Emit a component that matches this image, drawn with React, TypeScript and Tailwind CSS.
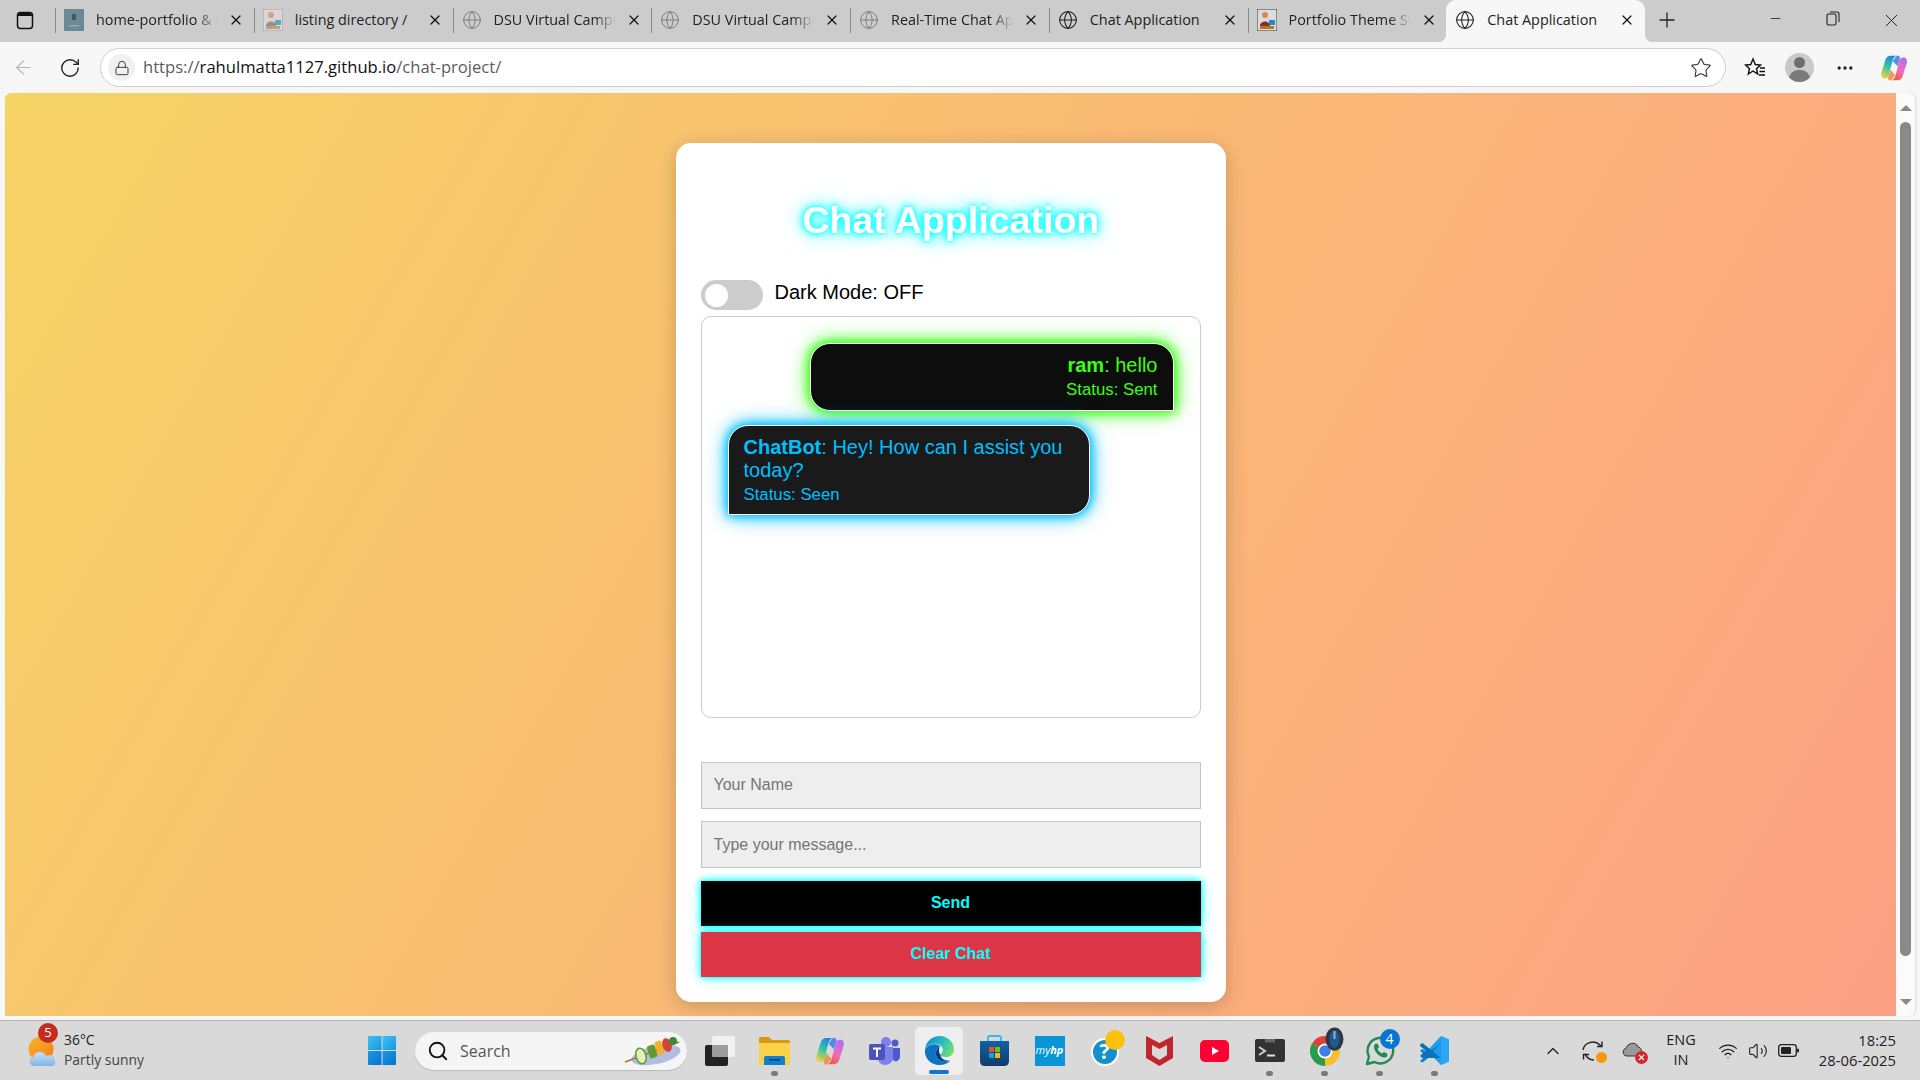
import { ArrowLeft, ChevronUp, Ellipsis, Globe, Lock, Minus, Plus, RotateCw, Search, Star, Volume2, Wifi, X } from 'lucide-react';
import type { ReactNode } from 'react';

const tabs = [
  { title: 'home-portfolio & user', icon: 'thumb', fade: true },
  { title: 'listing directory /', icon: 'person', fade: false },
  { title: 'DSU Virtual Campus', icon: 'grayGlobe', fade: true },
  { title: 'DSU Virtual Campus', icon: 'grayGlobe', fade: true },
  { title: 'Real-Time Chat App', icon: 'grayGlobe', fade: true },
  { title: 'Chat Application', icon: 'globe', fade: false },
  { title: 'Portfolio Theme Switch', icon: 'portfolio', fade: true },
];

function ThumbIcon() {
  return (
    <svg width="20" height="22" viewBox="0 0 20 22">
      <rect width="20" height="22" fill="#6c8996" />
      <rect x="8" y="5" width="4" height="6" fill="#3f5a68" />
      <rect x="5" y="16" width="10" height="1.5" fill="#93a9b3" />
    </svg>
  );
}

function PersonIcon({ vivid }: { vivid?: boolean }) {
  return (
    <svg width="20" height="22" viewBox="0 0 20 22">
      <rect width="20" height="22" fill={vivid ? '#dcdcdc' : '#d8d8d8'} stroke={vivid ? '#333' : '#999'} strokeWidth="1" />
      <circle cx="8" cy="6" r="3" fill={vivid ? '#d9874f' : '#cf9f86'} />
      <path d="M3 17 C3 11 13 11 13 17Z" fill={vivid ? '#8f2f24' : '#a98a80'} />
      <rect x="12" y="11" width="6" height="5" fill={vivid ? '#1a8fd0' : '#62a3c4'} />
      <rect x="3" y="17" width="14" height="3" fill={vivid ? '#b57a20' : '#b9a27e'} />
    </svg>
  );
}

function TabIcon({ icon }: { icon: string }) {
  if (icon === 'thumb') return <ThumbIcon />;
  if (icon === 'person') return <PersonIcon />;
  if (icon === 'portfolio') return <PersonIcon vivid />;
  if (icon === 'grayGlobe') return <Globe size={22} strokeWidth={1.2} className="text-[#7d7d7d]" />;
  return <Globe size={22} strokeWidth={1.3} className="text-[#222]" />;
}

function Tab({ title, icon, fade, active }: { title: string; icon: string; fade?: boolean; active?: boolean }) {
  return (
    <div className={`relative flex h-[42px] w-[198.75px] items-center pb-[3px] pl-[9px] ${active ? 'rounded-t-[10px] bg-[#f7f7f7]' : ''}`}>
      {!active && <div className="absolute left-0 top-[8px] h-[25px] w-px bg-[#8a8a8a]" />}
      {active && <div className="absolute bottom-0 left-[-8px] h-2 w-2 bg-[radial-gradient(circle_at_0_0,transparent_8px,#f7f7f7_8.5px)]" />}
      {active && <div className="absolute bottom-0 right-[-8px] h-2 w-2 bg-[radial-gradient(circle_at_100%_0,transparent_8px,#f7f7f7_8.5px)]" />}
      <div className="flex w-5 shrink-0 justify-center">
        <TabIcon icon={icon} />
      </div>
      <div className={`ml-3 w-[122px] overflow-hidden whitespace-nowrap text-[14.4px] text-[#222] ${fade ? '[mask-image:linear-gradient(to_right,black_82%,transparent)]' : ''}`}>
        {title}
      </div>
      <X size={16} strokeWidth={1.8} className="ml-[10px] text-[#111]" />
    </div>
  );
}

function SidebarIcon() {
  return (
    <svg width="18" height="19" viewBox="0 0 18 19" fill="none">
      <rect x="1.5" y="1.5" width="15" height="16" rx="3" stroke="#111" strokeWidth="1.5" />
      <path d="M2 5 Q2 2 4.5 2 H13.5 Q16 2 16 5Z" fill="#111" />
    </svg>
  );
}

function CopilotIcon({ size, id }: { size: number; id: string }) {
  return (
    <svg width={size} height={size} viewBox="0 0 32 32">
      <defs>
        <linearGradient id={`${id}a`} x1="0.7" y1="0" x2="0.2" y2="1">
          <stop offset="0" stopColor="#1b7ff0" />
          <stop offset="0.5" stopColor="#35c7a0" />
          <stop offset="1" stopColor="#f4d23c" />
        </linearGradient>
        <linearGradient id={`${id}b`} x1="0.7" y1="0" x2="0.3" y2="1">
          <stop offset="0" stopColor="#b56cf0" />
          <stop offset="0.55" stopColor="#ee6fb8" />
          <stop offset="1" stopColor="#f25a3c" />
        </linearGradient>
      </defs>
      <path d="M12 2 H20 C17 2 15.5 4 14.5 7 L10 24 C9.3 27 7.5 28 5 28 C2 28 0.5 25 1.5 21.5 L6 7 C7 4 9 2 12 2Z" fill={`url(#${id}a)`} />
      <path d="M20 30 H12 C15 30 16.5 28 17.5 25 L22 8 C22.7 5 24.5 4 27 4 C30 4 31.5 7 30.5 10.5 L26 25 C25 28 23 30 20 30Z" fill={`url(#${id}b)`} />
      <path d="M14.5 8 L19 2 H21 C22.5 2 23 4 22.5 6 L20 14 Z" fill="#3a7de8" opacity="0.85" />
      <path d="M17.5 24 L13 30 H11 C9.5 30 9 28 9.5 26 L12 18 Z" fill="#f08a3c" opacity="0.85" />
    </svg>
  );
}

function WindowsLogo() {
  return (
    <svg width="28" height="29" viewBox="0 0 28 29">
      <defs>
        <linearGradient id="winA" x1="0" y1="0" x2="1" y2="1">
          <stop offset="0" stopColor="#3fc3f5" />
          <stop offset="1" stopColor="#1695e0" />
        </linearGradient>
        <linearGradient id="winB" x1="0" y1="0" x2="1" y2="1">
          <stop offset="0" stopColor="#1a9ae6" />
          <stop offset="1" stopColor="#0672cf" />
        </linearGradient>
      </defs>
      <path d="M1 0 H13.5 V14 H0 V1 Q0 0 1 0Z" fill="url(#winA)" />
      <path d="M14.5 0 H27 Q28 0 28 1 V14 H14.5Z" fill="url(#winA)" />
      <path d="M0 15 H13.5 V29 H1 Q0 29 0 28Z" fill="url(#winB)" />
      <path d="M14.5 15 H28 V28 Q28 29 27 29 H14.5Z" fill="url(#winB)" />
    </svg>
  );
}

function WeatherIcon() {
  return (
    <svg width="28" height="30" viewBox="0 0 28 30">
      <defs>
        <linearGradient id="sun" x1="0" y1="0" x2="1" y2="1">
          <stop offset="0" stopColor="#fbb52e" />
          <stop offset="1" stopColor="#ef7d14" />
        </linearGradient>
        <linearGradient id="cloud" x1="0" y1="0" x2="0" y2="1">
          <stop offset="0" stopColor="#c6e2f8" />
          <stop offset="1" stopColor="#7fb6e8" />
        </linearGradient>
      </defs>
      <circle cx="13" cy="13" r="12.5" fill="url(#sun)" />
      <path d="M6 30 C1 30 0 22 5 21.5 C6 15 16 14 18 20 C23 18 28 21 27 25 C28 30 25 30 23 30Z" fill="url(#cloud)" />
    </svg>
  );
}

function Skewer() {
  return (
    <svg width="60" height="36" viewBox="0 0 60 36">
      <ellipse cx="33" cy="22" rx="25" ry="9" transform="rotate(-12 33 22)" fill="#b3bde0" />
      <line x1="2" y1="29" x2="56" y2="9" stroke="#a5763a" strokeWidth="1.6" />
      <ellipse cx="18" cy="23" rx="5" ry="8" transform="rotate(-15 18 23)" fill="#e6efb8" stroke="#5c9a3a" strokeWidth="1.5" />
      <rect x="25" y="12" width="8" height="13" rx="2" transform="rotate(-18 29 18)" fill="#5f9a34" />
      <rect x="33" y="8" width="7" height="14" rx="2" transform="rotate(-18 36 15)" fill="#f3b12a" />
      <ellipse cx="44" cy="12" rx="4.5" ry="7" transform="rotate(-18 44 12)" fill="#d24433" />
      <circle cx="50" cy="8" r="4" fill="#3f8a3a" />
    </svg>
  );
}

function TaskView() {
  return (
    <svg width="30" height="30" viewBox="0 0 30 30">
      <rect x="0" y="9" width="23" height="21" rx="2" fill="#222" />
      <rect x="7" y="0" width="23" height="21" rx="2" fill="#f4f4f4" fillOpacity="0.85" />
      <rect x="7" y="9" width="16" height="12" fill="#8a8a8a" fillOpacity="0.75" />
    </svg>
  );
}

function Files() {
  return (
    <svg width="31" height="30" viewBox="0 0 31 30">
      <path d="M0 3 Q0 1 2 1 H10 L13 4 H29 Q31 4 31 6 V10 H0Z" fill="#d9980f" />
      <path d="M0 7 H31 V28 Q31 29 30 29 H1 Q0 29 0 28Z" fill="#fbd24c" />
      <path d="M5 29 V22 Q5 20 7 20 H24 Q26 20 26 22 V29Z" fill="#0f7fd0" />
      <rect x="10" y="23" width="11" height="1.6" fill="#063f7a" />
    </svg>
  );
}

function Teams() {
  return (
    <svg width="31" height="28" viewBox="0 0 31 28">
      <circle cx="17" cy="5" r="5" fill="#7b83eb" />
      <circle cx="26" cy="6" r="3.5" fill="#5059c9" />
      <path d="M22 11 H31 V19 C31 23 28 25 25 24 L22 20Z" fill="#5059c9" />
      <path d="M9 10 H24 V21 C24 25 20 28 16 28 C12 28 9 25 9 21Z" fill="#7b83eb" />
      <rect x="0" y="7" width="16" height="16" rx="2" fill="#4b53bc" />
      <path d="M4 10.5 H12 V12.5 H9 V20 H7 V12.5 H4Z" fill="#fff" />
    </svg>
  );
}

function Edge() {
  return (
    <svg width="31" height="31" viewBox="0 0 32 32">
      <defs>
        <linearGradient id="edgeA" x1="0" y1="0.3" x2="1" y2="0.7">
          <stop offset="0" stopColor="#0f8fce" />
          <stop offset="0.55" stopColor="#2cc0c0" />
          <stop offset="1" stopColor="#7fe06a" />
        </linearGradient>
      </defs>
      <path d="M1 15 C2 6 9 1 16 1 C25 1 31 8 31 15 C31 20 27 23 22.5 23 C19.5 23 17 21.5 17 20.5 C17 19.5 19.5 18.5 19.5 15.5 C19.5 11.5 15 9 11 9 C6 9 2.5 11.5 1 15Z" fill="url(#edgeA)" />
      <path d="M1 15 C0 24 7 31 16 31 C20.5 31 24 29.5 27 26.5 C21 29 14 27 12.5 21.5 C11.5 17.5 13 14 16.5 11.5 C12 8 4 9.5 1 15Z" fill="#0c72c4" />
      <path d="M12.5 21.5 C14 27 21 29 27 26.5 C21 27 17.5 24.5 17 20.5 C15 18 15 14 16.5 11.5 C13 14 11.5 17.5 12.5 21.5Z" fill="#0a3f86" />
    </svg>
  );
}

function Store() {
  return (
    <svg width="29" height="31" viewBox="0 0 29 31">
      <defs>
        <linearGradient id="storeBg" x1="0" y1="0" x2="0" y2="1">
          <stop offset="0" stopColor="#0f62a8" />
          <stop offset="1" stopColor="#123a6b" />
        </linearGradient>
      </defs>
      <path d="M8 6 V3 Q8 1 10 1 H19 Q21 1 21 3 V6" fill="none" stroke="#34b6ef" strokeWidth="1.8" />
      <path d="M0 6 H29 V26 Q29 31 24 31 H5 Q0 31 0 26Z" fill="url(#storeBg)" />
      <rect x="9" y="12" width="5" height="5" fill="#f25022" />
      <rect x="15" y="12" width="5" height="5" fill="#7fba00" />
      <rect x="9" y="18" width="5" height="5" fill="#00a4ef" />
      <rect x="15" y="18" width="5" height="5" fill="#ffb900" />
    </svg>
  );
}

function MyHp() {
  return (
    <div className="flex h-[30px] w-[30px] items-center justify-center bg-[#0a96d6] text-[11px] italic text-white">
      my<b>hp</b>
    </div>
  );
}

function HelpIcon() {
  return (
    <div className="relative flex h-[30px] w-[30px] items-center justify-center">
      <div className="mt-[2px] flex h-[28px] w-[28px] items-center justify-center rounded-full border-2 border-white bg-[#1490cf] text-[21px] font-bold text-white">
        ?
      </div>
      <div className="absolute right-[-5px] top-[-6px] h-5 w-5 rounded-full bg-[#fdc00f]" />
    </div>
  );
}

function McAfee() {
  return (
    <svg width="27" height="30" viewBox="0 0 27 30">
      <path fillRule="evenodd" d="M0 0 L13.5 7 L27 0 V22 L13.5 30 L0 22Z M6 9 V19 L13.5 24 L21 19 V9 L13.5 13Z" fill="#c0272d" />
    </svg>
  );
}

function YouTube() {
  return (
    <svg width="29" height="22" viewBox="0 0 29 22">
      <rect width="29" height="22" rx="5" fill="#ff0033" />
      <path d="M12 7 L19 11 L12 15Z" fill="#fff" />
    </svg>
  );
}

function TerminalIcon() {
  return (
    <svg width="30" height="23" viewBox="0 0 30 23">
      <path d="M2 0 H28 Q30 0 30 2 V21 Q30 23 28 23 H2 Q0 23 0 21 V2 Q0 0 2 0Z" fill="#333" />
      <rect x="10" y="0" width="10" height="3.5" fill="#666" />
      <path d="M4 8 L10 12 L4 16" fill="none" stroke="#ccc" strokeWidth="2" />
      <rect x="12" y="15.5" width="8" height="2" fill="#ddd" />
    </svg>
  );
}

function Chrome() {
  return (
    <div className="relative h-[30px] w-[30px]">
      <svg width="30" height="30" viewBox="0 0 30 30">
        <path d="M15 15 L2 7.5 A15 15 0 0 1 28 7.5Z" fill="#dc4437" />
        <path d="M15 15 L28 7.5 A15 15 0 0 1 15 30Z" fill="#f5c02c" />
        <path d="M15 15 L15 30 A15 15 0 0 1 2 7.5Z" fill="#2b9a4b" />
        <circle cx="15" cy="15" r="7.5" fill="#fff" />
        <circle cx="15" cy="15" r="5.8" fill="#3f7fe6" />
      </svg>
      <svg width="19" height="24" viewBox="0 0 19 24" className="absolute left-[15px] top-[-9px]">
        <ellipse cx="9.5" cy="12" rx="9" ry="11.5" fill="#2b3744" />
        <ellipse cx="9.5" cy="12" rx="5" ry="9" fill="#20598f" />
        <rect x="8.5" y="4" width="2" height="8" fill="#8fb4d8" />
      </svg>
    </div>
  );
}

function WhatsApp() {
  return (
    <div className="relative h-[30px] w-[30px]">
      <svg width="30" height="30" viewBox="0 0 30 30">
        <path d="M2 28 L4 20.5 A12.8 12.8 0 1 1 9.5 26Z" fill="none" stroke="#1f8a52" strokeWidth="2.4" strokeLinejoin="round" />
        <path d="M10 8 L12.5 7.5 L14 11 L12.5 13 C13.5 15 15 16.5 17 17.5 L19 16 L22.5 18 L22 20.5 C20 22.5 15.5 21 12.5 18 C9.5 15 8 10.5 10 8Z" fill="#1f8a52" />
      </svg>
      <div className="absolute left-[15px] top-[-7px] flex h-5 w-5 items-center justify-center rounded-full bg-[#0a74d4] text-[14px] text-white">4</div>
    </div>
  );
}

function VsCode() {
  return (
    <svg width="31" height="31" viewBox="0 0 31 31">
      <path d="M22 1 L30 4.5 V26.5 L22 30 L8 16 Z" fill="#1f9cf0" />
      <path d="M22 1 L22 30 L30 26.5 V4.5Z" fill="#28a8f5" />
      <path d="M22 8 L8.5 18 L3.5 14 L1 15.5 L6.5 21 L1 26 L3.5 27.5 L8.5 23.5 Z" fill="#0e7fc8" />
      <path d="M22 23 L9 12.5 L3.5 8 L1 9.5 V11 L6.5 15.5 L1 21 L3.5 23 Z" fill="#0a72ba" />
    </svg>
  );
}

function SyncIcon() {
  return (
    <div className="relative h-[22px] w-[22px]">
      <svg width="22" height="22" viewBox="0 0 22 22" fill="none" stroke="#222" strokeWidth="1.4">
        <path d="M1 10 C2 3 12 -1 18 5 L19 7" />
        <path d="M20 1.5 V6.5 H15" />
        <path d="M3 14 L5 17 C8 20 10 20 12 20" />
        <path d="M1.5 19.5 V14.5 H7" />
      </svg>
      <div className="absolute bottom-[-1px] right-[-3px] h-[11px] w-[11px] rounded-full bg-[#f59a0c]" />
    </div>
  );
}

function CloudError() {
  return (
    <div className="relative h-[20px] w-[22px]">
      <svg width="20" height="16" viewBox="0 0 20 16">
        <path d="M5 15 C0 15 0 8 4 7.5 C5 2 14 0 16 6 C19 6 20 10 19 12 L16 15Z" fill="#9a9a9a" stroke="#333" strokeWidth="1" />
      </svg>
      <div className="absolute bottom-[-3px] right-[-4px] flex h-[13px] w-[13px] items-center justify-center rounded-full bg-[#d8232f]">
        <X size={9} strokeWidth={3} className="text-white" />
      </div>
    </div>
  );
}

function BatteryIcon() {
  return (
    <svg width="21" height="13" viewBox="0 0 21 13">
      <rect x="0.7" y="0.7" width="17.6" height="11.6" rx="2.5" fill="none" stroke="#222" strokeWidth="1.3" />
      <rect x="3" y="3" width="10" height="7" rx="1" fill="#222" />
      <rect x="19" y="4.5" width="2" height="4" rx="1" fill="#222" />
    </svg>
  );
}

function TaskItem({ children, dot, active }: { children: ReactNode; dot?: boolean; active?: boolean }) {
  return (
    <div className="relative flex h-[60px] w-[55px] items-center justify-center">
      {active && <div className="absolute left-[3px] top-[6px] h-[48px] w-[48px] rounded-[5px] bg-[#eeeeee]" />}
      <div className="relative">{children}</div>
      {dot && <div className="absolute left-[24px] top-[50px] h-[5px] w-[7px] rounded-full bg-[#7a7a7a]" />}
      {active && <div className="absolute left-[17px] top-[49px] h-[4px] w-[20px] rounded-full bg-[#0a78d6]" />}
    </div>
  );
}

function ChatCard() {
  return (
    <div className="mx-auto mt-[50px] flex h-[859px] w-[550px] flex-col rounded-[15px] bg-white p-[25px] shadow-[0_4px_20px_rgba(0,0,0,0.2)]">
      <h1 className="mt-[31px] text-center text-[37.6px] font-bold leading-[42px] text-white [text-shadow:0_0_5px_#0ff,0_0_10px_#0ff,0_0_20px_#0ff]">
        Chat Application
      </h1>
      <div className="mt-[39px] flex h-[36px] items-start">
        <div className="flex h-[30px] w-[62px] items-center rounded-full bg-[#cccccc] pl-[4px]">
          <div className="h-[23px] w-[23px] rounded-full bg-white" />
        </div>
        <span className="ml-[12px] text-[20px] leading-[24px] text-black">Dark Mode: OFF</span>
      </div>
      <div className="flex h-[402px] flex-col gap-[14px] rounded-[10px] border border-[#cccccc] px-[26px] pt-[26px]">
        <div className="ml-auto h-[68px] w-[364px] rounded-[20px] rounded-br-none border border-white bg-[#0d0d0d] px-[15px] py-[10px] text-right text-[#39ff14] shadow-[0_0_8px_#39ff14,0_0_16px_#39ff14,0_0_24px_rgba(57,255,20,0.5)]">
          <div className="text-[20px] leading-[23px]"><b>ram</b>: hello</div>
          <div className="mt-[3px] text-[16.8px] leading-[20px]">Status: Sent</div>
        </div>
        <div className="h-[90px] w-[362px] rounded-[20px] rounded-bl-none border border-white bg-[#1a1a1a] px-[15px] py-[10px] text-[#00bfff] shadow-[0_0_8px_#00bfff,0_0_16px_#00bfff,0_0_24px_rgba(0,191,255,0.5)]">
          <div className="text-[20px] leading-[23px]"><b>ChatBot</b>: Hey! How can I assist you today?</div>
          <div className="mt-[3px] text-[16.8px] leading-[20px]">Status: Seen</div>
        </div>
      </div>
      <input
        placeholder="Your Name"
        className="mt-[44px] h-[47px] w-full border border-[#c4c4c4] bg-[#eeeeee] px-[12px] pb-[2px] text-[16px] outline-none placeholder:text-[#757575]"
      />
      <input
        placeholder="Type your message..."
        className="mt-[12px] h-[47px] w-full border border-[#c4c4c4] bg-[#eeeeee] px-[12px] text-[16px] outline-none placeholder:text-[#757575]"
      />
      <button className="mt-[13px] h-[45px] w-full bg-black pb-[1px] text-[16px] font-bold text-[#00ffff] shadow-[0_0_4px_#00ffff,0_0_10px_#00ffff]">Send</button>
      <button className="mt-[6px] h-[45px] w-full bg-[#dc3545] pb-[2px] text-[16px] font-bold text-[#00ffff] shadow-[0_0_4px_#00ffff,0_0_10px_#00ffff]">Clear Chat</button>
    </div>
  );
}

export default function App() {
  return (
    <div className="flex h-screen w-screen flex-col overflow-hidden bg-[#f7f7f7] font-['Liberation_Sans',Arial,sans-serif]">
      {/* tab strip */}
      <div className="flex h-[42px] shrink-0 items-center bg-[#cccccc] font-['Open_Sans',sans-serif]">
        <div className="flex w-[55px] justify-center pb-[2px] pr-[5px]">
          <SidebarIcon />
        </div>
        {tabs.map((tab, i) => (
          <Tab key={i} {...tab} />
        ))}
        <Tab title="Chat Application" icon="globe" active />
        <div className="flex w-[44px] justify-center pb-[3px]">
          <Plus size={24} strokeWidth={1.3} className="text-[#222]" />
        </div>
        <div className="ml-auto flex">
          <div className="flex w-[58px] justify-center pt-[1px]"><Minus size={15} strokeWidth={1.3} className="text-[#222]" /></div>
          <div className="flex w-[58px] justify-center pt-[1px]">
            <svg width="14" height="15" viewBox="0 0 14 15" fill="none" stroke="#222" strokeWidth="1.1">
              <rect x="1" y="3" width="9" height="11" rx="1.5" />
              <path d="M4 1 H11 Q13 1 13 3 V11" />
            </svg>
          </div>
          <div className="flex w-[58px] justify-center pb-[1px]"><X size={21} strokeWidth={1.1} className="text-[#222]" /></div>
        </div>
      </div>

      {/* toolbar */}
      <div className="flex h-[51px] shrink-0 items-center font-['Open_Sans',sans-serif]">
        <div className="flex w-[47px] justify-center"><ArrowLeft size={23} strokeWidth={1.2} className="text-[#b5b5b5]" /></div>
        <div className="flex w-[46px] justify-center"><RotateCw size={22} strokeWidth={1.5} className="text-[#222]" /></div>
        <div className="ml-[7px] flex h-[39px] flex-1 items-center rounded-full border border-[#cfcfcf] bg-white pl-[7px] pr-[13px]">
          <div className="flex h-[27px] w-[27px] items-center justify-center rounded-full bg-[#f0f0f0]">
            <Lock size={16} strokeWidth={1.4} className="text-[#333]" />
          </div>
          <div className="ml-[8px] text-[16.6px] text-[#5c5c5c]">
            https://<span className="text-[#111]">rahulmatta1127.github.io</span>/chat-project/
          </div>
          <Star size={22} strokeWidth={1.2} className="ml-auto text-[#333]" />
        </div>
        <div className="ml-[6px] flex w-[45px] justify-center">
          <svg width="22" height="22" viewBox="0 0 22 22" fill="none" stroke="#111" strokeWidth="1.4">
            <path d="M9 2 L11.3 7.5 L16.5 8 L12.5 11.7 L13.7 17 L9 14 L4.3 17 L5.5 11.7 L1.5 8 L6.7 7.5Z" />
            <path d="M16 11 H21 M15.5 14.5 H21 M15 18 H21" />
          </svg>
        </div>
        <div className="flex w-[45px] justify-center">
          <div className="relative h-[29px] w-[29px] overflow-hidden rounded-full bg-[#c9c9c9]">
            <div className="absolute left-[9px] top-[4px] h-[11px] w-[11px] rounded-full bg-[#6e6e6e]" />
            <div className="absolute left-[4px] top-[17px] h-[18px] w-[21px] rounded-full bg-[#7a7a7a]" />
          </div>
        </div>
        <div className="flex w-[45px] justify-center"><Ellipsis size={20} strokeWidth={2} className="text-[#222]" /></div>
        <div className="flex w-[53px] justify-center"><CopilotIcon size={28} id="copilotTop" /></div>
      </div>

      {/* page + scrollbar */}
      <div className="flex min-h-0 flex-1 pb-[4px] pl-[5px]">
        <div className="min-w-0 flex-1 rounded-tl-[6px] bg-[linear-gradient(120deg,#f6d365,#fda085)]">
          <ChatCard />
        </div>
        <div className="mr-[5px] flex w-[19px] flex-col items-center rounded-r-[6px] bg-[#fbfbfb] shadow-[1px_0_2px_rgba(0,0,0,0.12)]">
          <div className="mt-[12px] h-0 w-0 border-x-[6px] border-b-[6px] border-x-transparent border-b-[#8a8a8a]" />
          <div className="mt-[11px] h-[834px] w-[11px] rounded-full bg-[#8a8a8a]" />
          <div className="mt-[43px] h-0 w-0 border-x-[6px] border-t-[6px] border-x-transparent border-t-[#8a8a8a]" />
        </div>
      </div>

      {/* taskbar */}
      <div className="flex h-[60px] shrink-0 items-center border-t border-[#b5b5b5] bg-[#d9d9d9] font-['Open_Sans',sans-serif] text-[#222]">
        <div className="relative flex w-[368px] items-center pl-[28px]">
          <WeatherIcon />
          <div className="absolute left-[38px] top-[-7px] flex h-5 w-5 items-center justify-center rounded-full bg-[#c42b1c] text-[13px] text-white">5</div>
          <div className="ml-[8px] pb-[2px] text-[13.9px] leading-[19.5px]">
            <div>36°C</div>
            <div className="text-[#444]">Partly sunny</div>
          </div>
        </div>
        <WindowsLogo />
        <div className="ml-[19px] flex h-[38px] w-[272px] items-center rounded-full bg-[#f5f5f5] pl-[12px] pr-[4px] shadow-[0_1px_1px_rgba(0,0,0,0.15)]">
          <Search size={22} strokeWidth={2} className="text-[#111]" />
          <span className="ml-[11px] text-[16px] text-[#555]">Search</span>
          <div className="ml-auto"><Skewer /></div>
        </div>
        <div className="ml-[5px] flex">
          <TaskItem><TaskView /></TaskItem>
          <TaskItem dot><Files /></TaskItem>
          <TaskItem><CopilotIcon size={30} id="copilotBar" /></TaskItem>
          <TaskItem><Teams /></TaskItem>
          <TaskItem active><Edge /></TaskItem>
          <TaskItem><Store /></TaskItem>
          <TaskItem><MyHp /></TaskItem>
          <TaskItem><HelpIcon /></TaskItem>
          <TaskItem><McAfee /></TaskItem>
          <TaskItem><YouTube /></TaskItem>
          <TaskItem dot><TerminalIcon /></TaskItem>
          <TaskItem dot><Chrome /></TaskItem>
          <TaskItem dot><WhatsApp /></TaskItem>
          <TaskItem dot><VsCode /></TaskItem>
        </div>
        <div className="ml-[71px] flex w-[40px] justify-center"><ChevronUp size={20} strokeWidth={1.6} /></div>
        <div className="flex w-[40px] justify-center"><SyncIcon /></div>
        <div className="flex w-[40px] justify-center"><CloudError /></div>
        <div className="w-[56px] pb-[2px] text-center text-[14.5px] leading-[20px]">
          <div>ENG</div>
          <div>IN</div>
        </div>
        <div className="ml-[4px] flex w-[30px] justify-center"><Wifi size={20} strokeWidth={1.5} /></div>
        <div className="flex w-[30px] justify-center"><Volume2 size={20} strokeWidth={1.3} /></div>
        <div className="flex w-[30px] justify-center"><BatteryIcon /></div>
        <div className="ml-auto pb-[2px] pr-[24px] text-right text-[14.8px] leading-[20px]">
          <div>18:25</div>
          <div>28-06-2025</div>
        </div>
      </div>
    </div>
  );
}
